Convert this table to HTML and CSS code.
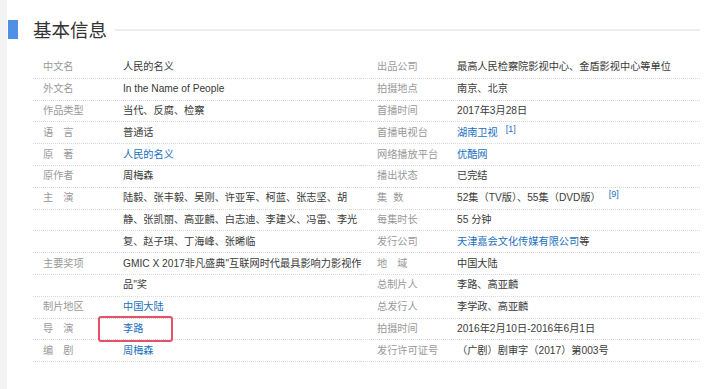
FILE: index.html
```html
<!DOCTYPE html>
<html lang="zh-CN">
<head>
<meta charset="utf-8">
<title>基本信息</title>
<link rel="stylesheet" href="styles.css">
</head>
<body>
<div class="page">
  <div class="strip"></div>
  <main class="main">
    <div class="title-row">
      <span class="title-bar"></span>
      <h2 class="title">基本信息</h2>
      <span class="title-line"></span>
    </div>
    <div class="info">
      <dl class="col col-left">
        <div class="row"><dt>中文名</dt><dd>人民的名义</dd></div>
        <div class="row"><dt>外文名</dt><dd>In the Name of People</dd></div>
        <div class="row"><dt>作品类型</dt><dd>当代、反腐、检察</dd></div>
        <div class="row"><dt class="sp2">语言</dt><dd>普通话</dd></div>
        <div class="row"><dt class="sp2">原著</dt><dd><a class="link">人民的名义</a></dd></div>
        <div class="row"><dt>原作者</dt><dd>周梅森</dd></div>
        <div class="row"><dt class="sp2">主演</dt><dd>陆毅、张丰毅、吴刚、许亚军、柯蓝、张志坚、胡</dd></div>
        <div class="row"><dt></dt><dd>静、张凯丽、高亚麟、白志迪、李建义、冯雷、李光</dd></div>
        <div class="row"><dt></dt><dd>复、赵子琪、丁海峰、张晞临</dd></div>
        <div class="row"><dt>主要奖项</dt><dd>GMIC X 2017非凡盛典"互联网时代最具影响力影视作</dd></div>
        <div class="row"><dt></dt><dd>品"奖</dd></div>
        <div class="row"><dt>制片地区</dt><dd><a class="link">中国大陆</a></dd></div>
        <div class="row"><dt class="sp2">导演</dt><dd class="marked"><a class="link">李路</a><span class="highlight"></span></dd></div>
        <div class="row"><dt class="sp2">编剧</dt><dd><a class="link">周梅森</a></dd></div>
      </dl>
      <dl class="col col-right">
        <div class="row"><dt>出品公司</dt><dd>最高人民检察院影视中心、金盾影视中心等单位</dd></div>
        <div class="row"><dt>拍摄地点</dt><dd>南京、北京</dd></div>
        <div class="row"><dt>首播时间</dt><dd>2017年3月28日</dd></div>
        <div class="row"><dt>首播电视台</dt><dd><a class="link">湖南卫视</a><sup class="ref">[1]</sup></dd></div>
        <div class="row"><dt>网络播放平台</dt><dd><a class="link">优酷网</a></dd></div>
        <div class="row"><dt>播出状态</dt><dd>已完结</dd></div>
        <div class="row"><dt class="sp1">集数</dt><dd>52集（TV版）、55集（DVD版）<sup class="ref">[9]</sup></dd></div>
        <div class="row"><dt>每集时长</dt><dd>55 分钟</dd></div>
        <div class="row"><dt>发行公司</dt><dd><a class="link">天津嘉会文化传媒有限公司</a>等</dd></div>
        <div class="row"><dt class="sp2">地域</dt><dd>中国大陆</dd></div>
        <div class="row"><dt>总制片人</dt><dd>李路、高亚麟</dd></div>
        <div class="row"><dt>总发行人</dt><dd>李学政、高亚麟</dd></div>
        <div class="row"><dt>拍摄时间</dt><dd>2016年2月10日-2016年6月1日</dd></div>
        <div class="row"><dt>发行许可证号</dt><dd>（广剧）剧审字（2017）第003号</dd></div>
      </dl>
    </div>
  </main>
</div>
</body>
</html>
```

FILE: styles.css
```css
* { box-sizing: border-box; }

html, body {
  margin: 0;
  padding: 0;
  background: #fff;
}

body {
  font-family: "Liberation Sans", "Noto Sans CJK SC", sans-serif;
  font-size: 10.2px;
  color: #3a3a3a;
}

.page {
  display: flex;
  width: 719px;
  height: 389px;
  overflow: hidden;
}

.strip {
  width: 7px;
  flex: none;
  background: #f3f3f3;
}

.main {
  flex: 1;
  padding: 20px 19px 0 1px;
}

.title-row {
  display: flex;
  align-items: center;
  height: 19px;
}

.title-bar {
  width: 10px;
  height: 19px;
  background: #4f8fe6;
  flex: none;
}

.title {
  margin: 0 0 0 15px;
  font-family: "Noto Sans CJK SC", sans-serif;
  font-weight: 400;
  font-size: 18.5px;
  line-height: 19px;
  color: #333;
}

.title-line {
  flex: 1;
  height: 2px;
  background: #ececec;
  margin-left: 8px;
}

.info {
  display: flex;
  margin-top: 18px;
  padding-left: 25px;
}

.col {
  margin: 0;
  display: flex;
  flex-direction: column;
}

.col-left { width: 327px; }
.col-right { flex: 1; }

.row {
  display: flex;
  height: 21.8px;
  align-items: center;
  border-bottom: 1px dotted #d9d9d9;
}

dt {
  color: #999;
  flex: none;
  line-height: 14px;
}

.col-left dt { width: 90px; padding-left: 10px; }
.col-right dt { width: 97px; padding-left: 17px; }

dt.sp2 { letter-spacing: 10px; }
dt.sp1 { letter-spacing: 6px; }

dd {
  margin: 0;
  white-space: nowrap;
  position: relative;
  line-height: 14px;
}

.link {
  color: #1a6fbf;
  text-decoration: none;
}

.ref {
  color: #1a6fbf;
  font-size: 9px;
  vertical-align: 4px;
  margin-left: 8px;
  line-height: 0;
}

.highlight {
  position: absolute;
  left: -25px;
  top: -6px;
  width: 75px;
  height: 26px;
  border: 2px solid #e8506a;
  border-radius: 3px;
}
```
